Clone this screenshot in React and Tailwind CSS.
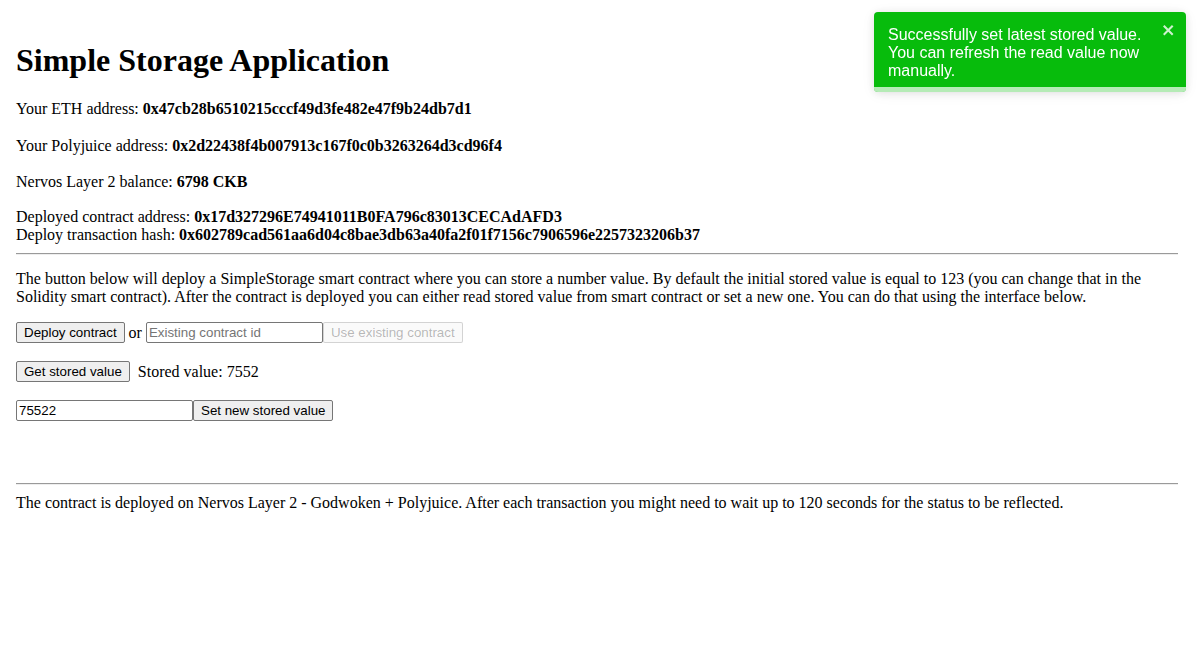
import { useState } from "react";

const btn =
  "h-[21px] px-[7px] rounded-[2px] border border-[#767676] bg-[#efefef] text-[13.33px] leading-none text-black font-['Liberation_Sans',Arial,sans-serif]";
const btnDisabled =
  "h-[21px] px-[7px] rounded-[2px] border border-[#7676764d] bg-[#efefef4d] text-[13.33px] leading-none text-[#1010104d] font-['Liberation_Sans',Arial,sans-serif]";
const input =
  "h-[21px] w-[177px] px-[2px] rounded-[2px] border border-[#767676] bg-white text-[13.33px] text-black placeholder:text-[#757575] outline-none font-['Liberation_Sans',Arial,sans-serif]";

function Toast({ onClose }) {
  return (
    <div className="fixed top-[12px] right-[18px] w-[312px] min-h-[80px] rounded-[4px] bg-[#07bc0c] shadow-[0_1px_10px_0_rgba(0,0,0,0.1),0_2px_15px_0_rgba(0,0,0,0.05)] overflow-hidden font-['Liberation_Sans',Arial,sans-serif]">
      <div className="flex justify-between pl-[14px] pr-[10px] pt-[14px] pb-[11px]">
        <div className="w-[262px] text-[16px] leading-[18px] text-white">
          Successfully set latest stored value. You can refresh the read value now manually.
        </div>
        <button onClick={onClose} className="-mt-[4px] h-[14px] w-[14px] text-white opacity-80">
          <svg viewBox="0 0 14 16" className="h-[16px] w-[14px]" fill="currentColor">
            <path d="M7.71 8.23l3.75 3.75-1.48 1.48-3.75-3.75-3.75 3.75L1 11.98l3.75-3.75L1 4.48 2.48 3l3.75 3.75L9.98 3l1.48 1.48-3.75 3.75z" />
          </svg>
        </button>
      </div>
      <div className="absolute bottom-0 left-0 h-[5px] w-full bg-white/70" />
    </div>
  );
}

export default function App() {
  const [showToast, setShowToast] = useState(true);
  const [newValue, setNewValue] = useState("75522");
  const [contractId, setContractId] = useState("");

  return (
    <div className="min-h-[661px] bg-white pl-4 pr-[26px] pt-[42px] text-[16px] text-black font-['Liberation_Serif','Times_New_Roman',serif]">
      <h1 className="m-0 text-[32px] font-bold leading-[37px]">Simple Storage Application</h1>

      <div className="mt-[21px] leading-[18px]">
        Your ETH address: <b>0x47cb28b6510215cccf49d3fe482e47f9b24db7d1</b>
      </div>
      <div className="mt-[19px] leading-[18px]">
        Your Polyjuice address: <b>0x2d22438f4b007913c167f0c0b3263264d3cd96f4</b>
      </div>
      <div className="mt-[18px] leading-[18px]">
        Nervos Layer 2 balance: <b>6798 CKB</b>
      </div>
      <div className="mt-[17px] leading-[18px]">
        Deployed contract address: <b>0x17d327296E74941011B0FA796c83013CECAdAFD3</b>
        <br />
        Deploy transaction hash: <b>0x602789cad561aa6d04c8bae3db63a40fa2f01f7156c7906596e2257323206b37</b>
      </div>

      <hr className="mt-[9px] border-t border-b border-t-[#9a9a9a] border-b-[#eeeeee]" />

      <p className="mt-[15px] leading-[18px]">
        The button below will deploy a SimpleStorage smart contract where you can store a number value. By default the initial
        stored value is equal to 123 (you can change that in the Solidity smart contract). After the contract is deployed you can
        either read stored value from smart contract or set a new one. You can do that using the interface below.
      </p>

      <div className="mt-[16px] flex items-center">
        <button className={btn}>Deploy contract</button>
        <span className="mx-1 leading-[18px]">or</span>
        <input
          className={input}
          placeholder="Existing contract id"
          value={contractId}
          onChange={(e) => setContractId(e.target.value)}
        />
        <button className={btnDisabled} disabled>
          Use existing contract
        </button>
      </div>

      <div className="mt-[18px] flex items-center">
        <button className={btn}>Get stored value</button>
        <span className="ml-2 leading-[18px]">Stored value: 7552</span>
      </div>

      <div className="mt-[18px] flex items-center">
        <input className={input} value={newValue} onChange={(e) => setNewValue(e.target.value)} />
        <button className={btn}>Set new stored value</button>
      </div>

      <hr className="mt-[62px] border-t border-b border-t-[#9a9a9a] border-b-[#eeeeee]" />

      <div className="mt-[9px] leading-[18px]">
        The contract is deployed on Nervos Layer 2 - Godwoken + Polyjuice. After each transaction you might need to wait up to
        120 seconds for the status to be reflected.
      </div>

      {showToast && <Toast onClose={() => setShowToast(false)} />}
    </div>
  );
}
